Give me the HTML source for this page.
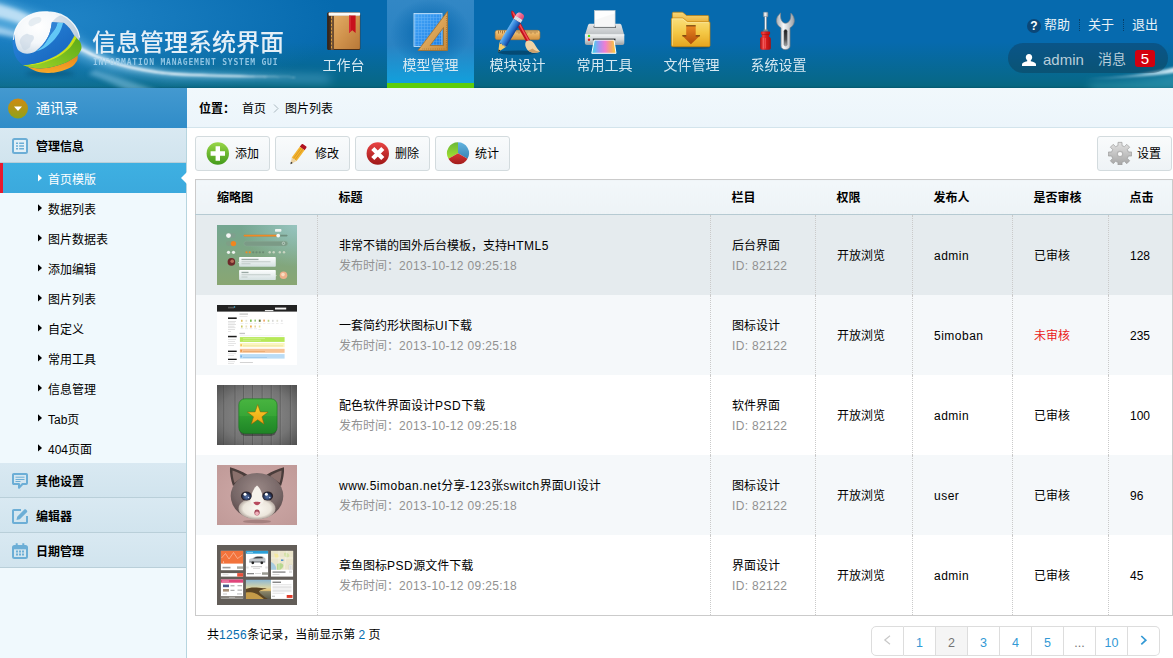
<!DOCTYPE html>
<html lang="zh-CN">
<head>
<meta charset="utf-8">
<title>信息管理系统界面</title>
<style>
*{margin:0;padding:0;box-sizing:content-box;}
html,body{width:1173px;height:658px;overflow:hidden;background:#fff;}
body{font-family:"Liberation Sans","Noto Sans CJK SC",sans-serif;font-size:12px;color:#000;position:relative;}
ul,li{list-style:none;}
i,cite,em{font-style:normal;}
/* ---------- header ---------- */
#top{position:absolute;left:0;top:0;width:1173px;height:88px;overflow:hidden;
 background:linear-gradient(to bottom,#066aae 0,#066aae 42px,#07688a 80px,#076781 86px,#04586f 88px);}
#topbg{position:absolute;left:0;top:0;}
#title{position:absolute;left:92px;top:25px;font-size:24px;line-height:36px;color:#e4eff7;font-weight:500;white-space:nowrap;letter-spacing:0;}
#subtitle{position:absolute;left:93px;top:57px;font-family:"DejaVu Sans Mono","Liberation Mono",monospace;font-size:8px;line-height:12px;color:#a8d4ee;white-space:nowrap;letter-spacing:.8px;opacity:.85;font-weight:bold;}
.nav{position:absolute;left:300px;top:0;height:88px;}
.nav li{float:left;width:87px;height:88px;text-align:center;position:relative;}
.nav li.sel{background:radial-gradient(ellipse 40px 34px at 50% 33px,rgba(8,104,174,.95) 0,rgba(8,104,174,.6) 50%,rgba(8,104,174,0) 100%),linear-gradient(to bottom,#3287c5 0,#2a83c3 45px,#12a0dc 83px);}
.nav li.sel:after{content:"";position:absolute;left:0;bottom:0;width:87px;height:5px;background:#5ccd0b;}
.nav li svg{position:absolute;left:19px;top:8px;width:48px;height:48px;}
.nav li h2{position:absolute;left:0;top:55px;width:87px;font-size:14px;line-height:20px;font-weight:normal;color:#d6e8f1;}
.toplinks{position:absolute;right:6px;top:15px;height:20px;}
.toplinks li{float:left;padding:0 9px;line-height:19px;font-size:13px;color:#e9f2f7;position:relative;}
.toplinks li+li:before{content:"";position:absolute;left:0;top:4px;height:12px;border-left:1px dotted #06406a;}
.toplinks .help{position:absolute;left:-8px;top:4px;width:14px;height:14px;border-radius:7px;background:#0b4778;color:#fff;font-size:12px;font-weight:bold;line-height:14px;text-align:center;}
.user{position:absolute;left:1008px;top:43px;width:160px;height:30px;border-radius:15px;background:rgba(20,40,60,.32);color:#b8ceda;font-size:15px;line-height:30px;white-space:nowrap;}
.user svg{position:absolute;left:14px;top:11px;}
.user span{position:absolute;left:35px;top:2px;}
.user i{position:absolute;left:90px;top:1px;font-size:14px;}
.user b{position:absolute;left:127px;top:7px;width:20px;height:17px;border-radius:3px;background:#d3000f;color:#fff;font-weight:normal;font-size:15px;line-height:17px;text-align:center;}
/* ---------- left ---------- */
#left{position:absolute;left:0;top:88px;width:186px;height:570px;background:#f0f9fd;border-right:1px solid #b7d5df;}
.lefttop{height:40px;line-height:40px;color:#fff;font-size:14px;background:linear-gradient(to bottom,#4499d0,#3a93cc 50%,#2f8cc8);width:187px;position:relative;}
.lefttop svg{position:absolute;left:8px;top:10px;}
.lefttop span{position:absolute;left:36px;top:0;}
.dd{height:35px;line-height:35px;font-weight:bold;font-size:12px;background:linear-gradient(to bottom,#d9e9f2,#d1e4ee);border-bottom:1px solid #b9cfd9;height:34px;position:relative;}
.dd svg{position:absolute;left:12px;top:10px;}
.dd span{position:absolute;left:36px;top:2px;}
.menuson li{height:30px;line-height:30px;position:relative;font-size:12px;}
.menuson li cite{position:absolute;left:38px;top:10.500px;width:4px;height:8px;}
.menuson li cite svg{display:block;fill:#000;}
.menuson li span{position:absolute;left:48px;top:2px;}
.menuson li.active{background:linear-gradient(to bottom,#3eb0e2,#3ba9dd);color:#fff;border-left:3px solid #e8192d;}
.menuson li.active cite{left:35px;}
.menuson li.active cite svg{fill:#fff;}
.menuson li.active span{left:45px;}
.menuson li.active em{position:absolute;right:-1px;top:9px;width:0;height:0;border-right:6px solid #fff;border-top:6px solid transparent;border-bottom:6px solid transparent;}
/* ---------- right ---------- */
#right{position:absolute;left:187px;top:88px;width:986px;height:570px;background:#fff;}
.place{height:39px;border-bottom:1px solid #d3e4ec;background:linear-gradient(to bottom,#f1f8fc,#ecf5fb);line-height:39px;position:relative;}
.place b{position:absolute;left:12px;top:2px;}
.place span{position:absolute;top:2px;}
.tool{position:absolute;top:48px;height:33px;line-height:33px;border:1px solid #d3dbde;border-radius:3px;background:linear-gradient(to bottom,#f9fbfc,#eef3f6);width:73px;}
.tool svg{position:absolute;left:10px;top:4px;}
.tool span{position:absolute;left:39px;top:1px;}
table{position:absolute;left:8px;top:91px;width:977px;border-collapse:collapse;border:1px solid #cbcbcb;table-layout:fixed;}
th{height:32px;line-height:32px;padding-top:2px;border-bottom:1px solid #b6cad2;text-align:left;padding-left:21px;background:linear-gradient(to bottom,#f2f7fa,#edf3f6);font-size:12px;}
td{height:78px;line-height:20px;padding:2px 0 0 21px;border-right:1px dotted #cacaca;font-size:12px;vertical-align:middle;}
td:last-child{border-right:none;}
td.img{padding:0 0 0 21px;height:80px;}
td p{color:#919191;}
td i{color:#ea2020;}
tr.odd td{background:#f5f8fa;}
tr.hov td{background:#e5ebee;}
.l{letter-spacing:.5px;}
td p .l,.pagin .l{letter-spacing:.35px;}
.thumb{display:block;width:80px;height:60px;}
.pagin{position:absolute;left:20px;top:537px;line-height:20px;}
.pagin i{color:#056dae;}
.plist{position:absolute;left:684px;top:538px;height:30px;}
.plist li{float:left;width:31px;height:28px;border:1px solid #ddd;border-left:none;text-align:center;line-height:32px;color:#3399d5;font-size:12.5px;position:relative;}
.plist li:first-child{border-left:1px solid #ddd;border-radius:5px 0 0 5px;color:#c4c4c4;}
.plist li:last-child{border-radius:0 5px 5px 0;}
.plist li.cur{background:#f5f5f5;color:#737373;}
.plist li.more{color:#737373;}
.plist li svg{position:absolute;left:11px;top:8px;}
</style>
</head>
<body>
<div id="top">
<svg id="topbg" width="1173" height="88" viewBox="0 0 1173 88"><defs><filter id="bl2" x="-20%" y="-50%" width="140%" height="200%"><feGaussianBlur stdDeviation="2"/></filter><filter id="bl1" x="-20%" y="-50%" width="140%" height="200%"><feGaussianBlur stdDeviation="1"/></filter><filter id="bl4" x="-20%" y="-50%" width="140%" height="200%"><feGaussianBlur stdDeviation="5"/></filter><radialGradient id="hg1" cx="0" cy="0" r="1" gradientUnits="userSpaceOnUse" gradientTransform="translate(40 20) scale(300 90)"><stop offset="0" stop-color="#2a8ed0" stop-opacity=".75"/><stop offset="1" stop-color="#2a8ed0" stop-opacity="0"/></radialGradient><linearGradient id="hs1" x1="0" y1="0" x2="1" y2="0"><stop offset="0" stop-color="#fff" stop-opacity=".55"/><stop offset=".25" stop-color="#dff2ff" stop-opacity=".45"/><stop offset=".7" stop-color="#bfe6ff" stop-opacity=".45"/><stop offset="1" stop-color="#bfe6ff" stop-opacity="0"/></linearGradient><linearGradient id="hs2" x1="0" y1="0" x2="1" y2="0"><stop offset="0" stop-color="#bfe6ff" stop-opacity="0"/><stop offset="1" stop-color="#e8f8ff" stop-opacity=".9"/></linearGradient><radialGradient id="gl1" cx=".38" cy=".3" r=".75"><stop offset="0" stop-color="#ffffff"/><stop offset=".45" stop-color="#f4f7fa"/><stop offset=".75" stop-color="#d3dfe9"/><stop offset="1" stop-color="#9dbbd2"/></radialGradient><linearGradient id="gb1" x1="0" y1="0" x2="1" y2="1"><stop offset="0" stop-color="#2a8ae0"/><stop offset="1" stop-color="#1560b8"/></linearGradient><linearGradient id="gg1" x1="1" y1="0" x2="0" y2="1"><stop offset="0" stop-color="#5aa818"/><stop offset=".5" stop-color="#7cc020"/><stop offset="1" stop-color="#a4d428"/></linearGradient><linearGradient id="go1" x1="0" y1="0" x2="0" y2="1"><stop offset="0" stop-color="#e8861a"/><stop offset="1" stop-color="#f8a82a"/></linearGradient></defs><rect x="0" y="0" width="420" height="88" fill="url(#hg1)"/><g filter="url(#bl4)"><path d="M-10 -5L50 18 85 42 120 62 170 72 330 76 330 82 170 80 110 72 70 55 30 38-10 30z" fill="#7cc8f0" opacity=".5"/></g><g filter="url(#bl2)"><path d="M-5 3C15 8 35 16 50 26L44 34C30 27 12 20-5 17z" fill="#eaf6ff" opacity=".7"/><path d="M70.0 39.0C71.8 40.0 76.0 42.4 81.0 45.0C86.0 47.6 92.7 51.5 100.0 54.5C107.3 57.5 116.7 60.7 125.0 63.0C133.3 65.3 141.7 67.0 150.0 68.5C158.3 70.0 165.0 70.9 175.0 71.8C185.0 72.6 197.5 73.0 210.0 73.5C222.5 74.0 235.8 74.5 250.0 75.0C264.2 75.5 287.5 76.0 295.0 76.2L295.0 78.2C287.5 78.2 264.2 78.1 250.0 78.0C235.8 77.9 222.5 77.8 210.0 77.5C197.5 77.2 185.0 76.9 175.0 76.2C165.0 75.6 158.3 74.7 150.0 73.5C141.7 72.3 133.3 71.0 125.0 69.0C116.7 67.0 107.3 64.2 100.0 61.5C92.7 58.8 86.0 55.4 81.0 53.0C76.0 50.6 71.8 48.0 70.0 47.0Z" fill="url(#hs1)"/><path d="M-5 26C15 30 40 40 60 48L58 52C40 44 15 36-5 34z" fill="#dff2ff" opacity=".6"/><path d="M95 70C120 78 140 84 160 92L130 92C118 86 105 80 88 74z" fill="#9fd8f4" opacity=".45"/></g><g filter="url(#bl1)"><path d="M70.0 42.2C71.8 43.2 76.0 45.6 81.0 48.0C86.0 50.4 92.7 54.1 100.0 56.9C107.3 59.7 116.7 62.7 125.0 64.9C133.3 67.1 141.7 68.6 150.0 70.0C158.3 71.4 165.0 72.3 175.0 73.1C185.0 73.9 197.5 74.3 210.0 74.8C222.5 75.2 235.8 75.5 250.0 75.9C264.2 76.3 287.5 76.7 295.0 76.9L295.0 77.5C287.5 77.4 264.2 77.3 250.0 77.1C235.8 76.9 222.5 76.6 210.0 76.2C197.5 75.9 185.0 75.6 175.0 74.9C165.0 74.2 158.3 73.3 150.0 72.0C141.7 70.7 133.3 69.2 125.0 67.1C116.7 64.9 107.3 62.0 100.0 59.1C92.7 56.2 86.0 52.6 81.0 50.0C76.0 47.4 71.8 44.8 70.0 43.8Z" fill="#fff" opacity=".92"/></g><g filter="url(#bl4)"><path d="M1090 84C1130 82 1155 78 1180 70L1180 92 1090 92z" fill="#4fc0d8" opacity=".38"/></g><g filter="url(#bl1)"><path d="M1085 78.500C1120 77 1150 73.500 1176 67L1176 72.500C1150 76.500 1120 78.500 1085 79.300z" fill="url(#hs2)"/></g><ellipse cx="50" cy="73.500" rx="24" ry="2.500" fill="#04405e" opacity=".45" filter="url(#bl2)"/><path d="M13.4 39.8C13.8 37.9 14.3 31.9 15.9 28.5C17.4 25.1 19.6 22.0 22.6 19.5C25.6 17.0 29.6 14.6 33.9 13.3C38.2 12.0 44.0 11.7 48.5 11.9C53.0 12.0 57.1 12.9 60.9 14.4C64.6 16.0 68.3 18.7 71.0 21.2C73.7 23.7 75.8 26.9 77.2 29.6C78.6 32.3 79.3 36.2 79.7 37.5C79.0 39.8 79.0 47.3 75.5 51.0C72.0 54.8 65.2 58.5 58.6 60.0C52.1 61.5 42.7 61.1 36.1 60.0C29.6 58.9 23.0 56.6 19.3 53.3C15.5 49.9 14.4 42.0 13.4 39.8Z" fill="url(#gl1)"/><path d="M20 40c1-3 3-5 6-6 2-1 3 1 5 1s3 1 3 3-2 3-3 5 0 4-2 5-3 3-5 2-2-3-3-5-2-3-1-5z" fill="#c4d4e2" opacity=".55"/><path d="M30 20c2-2 5-3 8-3s4 2 3 4-3 2-5 3-4 3-6 2-2-4 0-6z" fill="#d0dde8" opacity=".5"/><path d="M52 22.300L64.300 22.900 74.400 35.800 79.500 37.500C78 28 72 20 62 15 58 16 54 19 52 22.300z" fill="#b4c8da" opacity=".55"/><path d="M77.8 55.5C77.7 56.1 77.8 57.9 77.5 58.9C77.3 59.9 77.5 60.3 76.4 61.7C75.3 63.1 74.0 65.6 71.0 67.3C68.0 69.0 62.6 70.9 58.6 71.8C54.7 72.8 51.1 73.0 47.4 72.9C43.6 72.9 39.3 72.2 36.1 71.3C32.9 70.3 30.5 68.4 28.3 67.3C26.0 66.3 23.6 65.4 22.6 65.1C23.6 65.4 25.4 66.2 28.3 66.8C31.1 67.3 35.4 68.4 39.5 68.4C43.6 68.4 48.5 67.8 53.0 66.8C57.5 65.7 62.4 64.1 66.5 62.3C70.6 60.4 75.9 56.6 77.8 55.5Z" fill="url(#go1)"/><path d="M74.4 35.8C75.0 36.5 77.3 38.5 78.3 39.8C79.4 41.0 80.1 41.6 80.6 43.1C81.1 44.6 81.8 46.7 81.4 48.8C80.9 50.8 78.4 54.4 77.8 55.5C75.9 56.6 70.6 60.4 66.5 62.3C62.4 64.1 57.5 65.7 53.0 66.8C48.5 67.8 43.6 68.4 39.5 68.4C35.4 68.4 31.1 67.3 28.3 66.8C25.4 66.2 23.6 65.4 22.6 65.1C23.8 65.0 26.2 65.1 29.4 64.5C32.6 63.9 37.3 63.2 41.8 61.7C46.3 60.2 52.1 58.0 56.4 55.5C60.7 53.0 64.6 49.8 67.6 46.5C70.6 43.2 73.3 37.6 74.4 35.8Z" fill="url(#gg1)"/><path d="M74.4 35.8C74.8 36.2 76.3 37.7 76.6 38.1C75.4 39.8 72.6 45.2 69.4 48.3C66.3 51.5 62.2 54.5 57.7 57.0C53.2 59.4 47.2 61.6 42.4 62.9C37.7 64.3 32.7 64.8 29.4 65.2C26.1 65.5 23.8 65.1 22.6 65.1C23.8 65.0 26.2 65.1 29.4 64.5C32.6 63.9 37.3 63.2 41.8 61.7C46.3 60.2 52.1 58.0 56.4 55.5C60.7 53.0 64.6 49.8 67.6 46.5C70.6 43.2 73.3 37.6 74.4 35.8Z" fill="#d4e61c" opacity=".9"/><path d="M64.3 22.9C65.2 23.8 68.2 26.3 69.9 28.5C71.6 30.7 73.6 34.6 74.4 35.8C73.3 37.6 70.6 43.2 67.6 46.5C64.6 49.8 60.7 53.0 56.4 55.5C52.1 58.0 46.3 60.2 41.8 61.7C37.3 63.2 32.6 63.9 29.4 64.5C26.2 65.1 23.8 65.0 22.6 65.1C21.8 64.2 19.0 62.0 17.6 60.0C16.2 58.0 15.0 56.1 14.2 53.3C13.3 50.4 12.7 45.8 12.5 43.1C12.3 40.5 12.7 39.0 13.1 37.5C13.4 36.0 14.5 34.7 14.8 34.1C14.8 35.1 14.8 37.9 15.0 39.8C15.2 41.6 15.4 43.5 16.1 45.4C16.8 47.3 17.4 49.6 19.3 51.0C21.1 52.4 24.3 53.8 27.1 53.8C29.9 53.8 33.3 52.8 36.1 51.0C38.9 49.2 41.8 46.1 44.0 43.1C46.3 40.1 48.3 36.5 49.6 33.0C50.9 29.5 51.5 24.1 51.9 22.3C53.9 22.4 62.2 22.8 64.3 22.9Z" fill="url(#gb1)"/><path d="M57.5 22.7C58.4 22.7 62.2 22.8 63.1 22.9C62.6 24.4 61.4 28.9 59.8 31.9C58.1 34.9 55.6 38.2 53.0 40.9C50.4 43.6 46.8 46.5 44.0 48.2C41.2 49.9 37.4 50.7 36.1 51.2C37.4 50.2 41.7 47.5 44.0 44.8C46.3 42.2 48.3 38.0 50.2 35.3C52.1 32.5 54.0 30.6 55.3 28.5C56.5 26.4 57.1 23.6 57.5 22.7Z" fill="#62c8f6"/><path d="M51.9 22.3C52.8 22.4 56.6 22.6 57.5 22.7C57.1 23.6 56.5 26.4 55.3 28.5C54.0 30.6 52.1 32.5 50.2 35.3C48.3 38.0 46.3 42.2 44.0 44.8C41.7 47.5 37.4 50.2 36.1 51.2C37.4 49.9 41.8 46.2 44.0 43.1C46.3 40.1 48.3 36.5 49.6 33.0C50.9 29.5 51.5 24.1 51.9 22.3Z" fill="#2f82d4"/><path d="M13.400 39.800C13.800 37.900 14.300 31.900 15.900 28.500C17.400 25.100 19.600 22 22.600 19.500C25.600 17 29.600 14.600 33.900 13.300C38.200 12 44 11.700 48.500 11.900C53 12 57.100 12.900 60.900 14.400C64.600 16 68.300 18.700 71 21.200C73.700 23.700 75.800 26.900 77.200 29.600C78.600 32.300 79.300 36.200 79.700 37.500" fill="none" stroke="#fff" stroke-width="1.200" opacity=".85"/></svg>
<div id="title">信息管理系统界面</div>
<div id="subtitle">INFORMATION MANAGEMENT SYSTEM GUI</div>
<ul class="nav">
<li><svg viewBox="0 0 48 48"><defs><linearGradient id="bk1" x1="0" y1="0" x2="1" y2="1"><stop offset="0" stop-color="#e2ac66"/><stop offset=".5" stop-color="#d0924c"/><stop offset="1" stop-color="#b87838"/></linearGradient><linearGradient id="bk2" x1="0" y1="0" x2="1" y2="0"><stop offset="0" stop-color="#2e2018"/><stop offset=".55" stop-color="#4a3424"/><stop offset=".6" stop-color="#7a5a3c"/><stop offset="1" stop-color="#6a4a30"/></linearGradient></defs><rect x="8.300" y="4.200" width="33" height="37.800" rx="1.500" fill="#4a2e18"/><rect x="14.700" y="7.600" width="26.200" height="33.400" rx=".8" fill="url(#bk1)"/><path d="M8.300 6c0-1 .7-1.700 1.600-1.700h4.900V41.900H9.900c-.9 0-1.600-.7-1.600-1.600z" fill="url(#bk2)"/><rect x="9.600" y="4.500" width="31.500" height="3.200" rx=".6" fill="#fbfbf8"/><path d="M12.500 8.500v32" stroke="#e8a640" stroke-width=".9" stroke-dasharray="2.200 1.500"/><path d="M30 7.600h6.600v17.300l-3.300-2.700-3.300 2.700z" fill="#c8101c"/><path d="M30 7.600h1.800v15.700l-1.800 1.500z" fill="#e4404a" opacity=".55"/></svg><h2>工作台</h2></li>
<li class="sel"><svg viewBox="0 0 48 48"><defs><linearGradient id="bp1" x1="0" y1="0" x2="1" y2="1"><stop offset="0" stop-color="#46a6f6"/><stop offset="1" stop-color="#1b7fe6"/></linearGradient><linearGradient id="bp2" x1="0" y1="0" x2="1" y2="1"><stop offset="0" stop-color="#f0c27a"/><stop offset="1" stop-color="#c98a3a"/></linearGradient><pattern id="bpg" width="3" height="3" patternUnits="userSpaceOnUse"><path d="M0 .5h3M.5 0v3" stroke="#a8d6fc" stroke-width=".5" opacity=".4"/></pattern></defs><rect x="8" y="5.500" width="28" height="33" fill="url(#bp1)" stroke="#cfe8fd" stroke-width=".8"/><rect x="8.500" y="6" width="27" height="32" fill="url(#bpg)"/><path d="M41.500 3.500V42.500H12z M37.500 19.500V37.500H24z" fill="url(#bp2)" fill-rule="evenodd" stroke="#a8702a" stroke-width=".8"/><path d="M40.500 8v33H16" fill="none" stroke="#8a5a20" stroke-width=".8" stroke-dasharray=".6 1.600"/></svg><h2>模型管理</h2></li>
<li><svg viewBox="0 0 48 48"><defs><linearGradient id="ap1" x1="0" y1="0" x2="0" y2="1"><stop offset="0" stop-color="#f4cc88"/><stop offset=".5" stop-color="#e6ae5e"/><stop offset="1" stop-color="#d2903e"/></linearGradient><linearGradient id="ap2" x1="0" y1="0" x2="1" y2="0"><stop offset="0" stop-color="#6cb6f4"/><stop offset=".35" stop-color="#3e8ee0"/><stop offset=".7" stop-color="#2468c4"/><stop offset="1" stop-color="#123c8c"/></linearGradient><linearGradient id="ap3" x1="0" y1="0" x2="1" y2="0"><stop offset="0" stop-color="#fab0c4"/><stop offset=".5" stop-color="#f26a90"/><stop offset="1" stop-color="#d84a74"/></linearGradient></defs><ellipse cx="25" cy="44.600" rx="20" ry="2.200" fill="#03324e" opacity=".55"/><rect x="2.200" y="22.300" width="44.700" height="9.400" rx="2.200" fill="url(#ap1)" stroke="#b87a2c" stroke-width=".6"/><path d="M5.500 22.600v3M7.500 22.600v2M9.500 22.600v3M11.500 22.600v2M24 22.600v2M26 22.600v3M28 22.600v2M30 22.600v3M32 22.600v2M34 22.600v3M36 22.600v2M38 22.600v3M40 22.600v2M42 22.600v3M44 22.600v2" stroke="#8a5a20" stroke-width=".7"/><path d="M18.800 2.400C20.500 3 21.600 4.500 22.600 6.500L37 32 33.400 34 19.400 9C18.200 6.500 17.800 4 18.800 2.400z" fill="#c4101a"/><path d="M19.300 3.200C20.600 4 21.300 5 22 6.500L36.200 32.300 35 33 20.300 6.800C19.600 5.500 19.200 4.300 19.300 3.200z" fill="#f0505a"/><path d="M33 33.600C36 31.600 39.200 32.600 41.200 35.600 43.200 39 45 42 47 43.700 43 45.500 38 45 35 42.500 32.400 40 31.500 36 33 33.600z" fill="#eed4a6"/><path d="M39.500 40.500C41.500 42.300 44 43.500 47 43.700 43 45.500 38 45 35 42.500 36.500 42 38 41.500 39.500 40.500z" fill="#cfa06a"/><g transform="translate(5.300 44) rotate(31.200) translate(-26.600 -49.300)"><path d="M22.500 9.700V7.200c0-1.700 1.300-3 3-3h2.200c1.700 0 3 1.300 3 3v2.500z" fill="url(#ap3)"/><rect x="22.500" y="9.500" width="8.200" height="3.500" fill="#e9edf1"/><path d="M22.500 10.600h8.200M22.500 12h8.200" stroke="#b4bcc4" stroke-width=".4"/><rect x="22.500" y="13" width="8.200" height="27.300" fill="url(#ap2)"/><path d="M22.500 40.300h8.200l-4.100 9z" fill="#f6cc6a"/><path d="M22.500 40.300l1.400 1.200 1.400-1.200 1.300 1.200 1.400-1.200 1.300 1.200 1.400-1.200z" fill="#2468c4"/><path d="M25.500 46.900h2.200l-1.100 2.400z" fill="#1c1c1c"/></g></svg><h2>模块设计</h2></li>
<li><svg viewBox="0 0 48 48"><defs><linearGradient id="prT" x1="0" y1="0" x2="0" y2="1"><stop offset="0" stop-color="#e4e6e8"/><stop offset="1" stop-color="#bcc0c3"/></linearGradient><linearGradient id="prF" x1="0" y1="0" x2="0" y2="1"><stop offset="0" stop-color="#eef0f1"/><stop offset=".5" stop-color="#d2d5d7"/><stop offset="1" stop-color="#9a9ea2"/></linearGradient><linearGradient id="pr2" x1="0" y1="0" x2="1" y2="0"><stop offset="0" stop-color="#30dcec"/><stop offset=".3" stop-color="#a494f2"/><stop offset=".55" stop-color="#f07ed2"/><stop offset=".8" stop-color="#f6a86a"/><stop offset="1" stop-color="#f8d23c"/></linearGradient></defs><path d="M10 15.700h29.500c1 0 1.600.5 2 1.500L44.300 27.200H4.900L8 17.200c.4-1 1-1.500 2-1.500z" fill="url(#prT)"/><rect x="13.600" y="17.600" width="22.400" height="2.400" rx="1" fill="#34373a"/><rect x="14.400" y="2.500" width="20.700" height="16.600" fill="#f7f7f7" stroke="#c4c7ca" stroke-width=".6"/><path d="M15 3.100h19.500v2.500L15 12z" fill="#fff" opacity=".8"/><path d="M4.900 26.500h39.400V35c0 1.200-.8 2-2 2H6.900c-1.200 0-2-.8-2-2z" fill="url(#prF)"/><path d="M4.900 26.800h39.400" stroke="#f8f9fa" stroke-width=".7"/><rect x="12.800" y="30.600" width="22.700" height="1.800" fill="#2a2c2e"/><path d="M14.300 32.100H34l2 13.200H11.800z" fill="url(#pr2)" stroke="#fff" stroke-width="1"/><circle cx="9" cy="27.900" r="1.200" fill="#58e010"/><circle cx="9" cy="31.700" r="1.200" fill="#e42020"/></svg><h2>常用工具</h2></li>
<li><svg viewBox="0 0 48 48"><defs><linearGradient id="fd0" x1="0" y1="0" x2="0" y2="1"><stop offset="0" stop-color="#f8d878"/><stop offset="1" stop-color="#e8aa30"/></linearGradient><linearGradient id="fd1" x1="0" y1="0" x2="0" y2="1"><stop offset="0" stop-color="#fae07e"/><stop offset=".5" stop-color="#f4c846"/><stop offset="1" stop-color="#e6a41e"/></linearGradient><linearGradient id="fd2" x1="0" y1="0" x2="0" y2="1"><stop offset="0" stop-color="#ec8a22"/><stop offset="1" stop-color="#b04a08"/></linearGradient></defs><ellipse cx="24" cy="39.800" rx="19" ry="1.500" fill="#03324e" opacity=".35"/><path d="M5.300 5.400c0-.7.5-1.200 1.200-1.200h8.500c.5 0 .9.200 1.200.5l3.400 2.800h21c.7 0 1.200.5 1.200 1.200V16H5.300z" fill="url(#fd0)" stroke="#c07c08" stroke-width=".7"/><path d="M4.400 11.200c0-.7.5-1.200 1.200-1.200h9.800c.4 0 .8.150 1.100.4l4 3.300h21.300c.7 0 1.200.5 1.200 1.200v22.600c0 .7-.5 1.200-1.200 1.200H5.600c-.7 0-1.200-.5-1.200-1.200z" fill="url(#fd1)" stroke="#c07c08" stroke-width=".7"/><path d="M5.300 37.500V11.400c0-.3.200-.5.500-.5h9.500c.3 0 .6.100.8.300l4 3.400h21.600" fill="none" stroke="#fdeeb0" stroke-width=".7" opacity=".9"/><path d="M19.200 17.500h9.500v10.100h4.500L23.900 36.200 15.100 27.600h4.100z" fill="url(#fd2)"/><path d="M19.200 17.800h9.500M15.300 27.800h4M28.700 27.800h4.300" stroke="#3a1a00" stroke-width=".8"/></svg><h2>文件管理</h2></li>
<li><svg viewBox="0 0 48 48"><defs><linearGradient id="sd1" x1="0" y1="0" x2="1" y2="0"><stop offset="0" stop-color="#b01010"/><stop offset=".3" stop-color="#ee4040"/><stop offset=".55" stop-color="#d81c1c"/><stop offset="1" stop-color="#a80e0e"/></linearGradient><linearGradient id="sd2" x1="0" y1="0" x2="1" y2="0"><stop offset="0" stop-color="#a8aeb4"/><stop offset=".4" stop-color="#f6f8fa"/><stop offset="1" stop-color="#9aa0a6"/></linearGradient><linearGradient id="sd3" x1="0" y1="0" x2="0" y2="1"><stop offset="0" stop-color="#1c1c1e"/><stop offset=".6" stop-color="#4a4c4e"/><stop offset="1" stop-color="#a8aaac"/></linearGradient></defs><rect x="9.400" y="4.200" width="4.500" height="4.600" rx=".5" fill="url(#sd2)" stroke="#8a9096" stroke-width=".4"/><rect x="10.600" y="8.600" width="2.100" height="14" fill="url(#sd2)" stroke="#8a9096" stroke-width=".3"/><path d="M9.500 21.500h4.300v2H9.500z" fill="#7a8a80"/><path d="M7.300 23.500h8c.5 0 .8.300.8.800v1.400c0 .5-.3.800-.8.800l-.5 2.300c1.200.3 2 1 2 2.200v9c0 1-.8 1.700-1.800 1.700H7.900c-1 0-1.800-.7-1.800-1.700v-9c0-1.200.8-1.900 2-2.200l-.5-2.300c-.5 0-.8-.3-.8-.8v-1.400c0-.5.3-.8.800-.8z" fill="url(#sd1)"/><path d="M9.300 30v10.500M11.300 30v10.500" stroke="#f88" stroke-width=".7" opacity=".7"/><path d="M7.800 26.500h7.300" stroke="#8a0c0c" stroke-width=".6" opacity=".7"/><path d="M26.600 5C23.500 7.500 22.200 10.500 22.500 13.500 22.800 16.500 24.800 18.500 27 19.800V38C27 40.200 29 41.600 31.500 41.600S36 40.200 36 38V19.800C38.300 18.500 40 16.500 40.300 13.500 40.600 10.500 39.500 7.500 36.900 5.200 37 8 36.800 10.500 35.800 12.300 34.800 14.200 33.300 15.300 31.500 15.300S28.300 14.200 27.400 12.300C26.500 10.500 26.400 8 26.600 5z" fill="url(#sd2)" stroke="#7c8288" stroke-width=".7"/><rect x="29.900" y="21.500" width="3.300" height="16.500" rx="1.650" fill="url(#sd3)" stroke="#6a6e72" stroke-width=".4"/></svg><h2>系统设置</h2></li>
</ul>
<ul class="toplinks"><li><span class="help">?</span>帮助</li><li>关于</li><li>退出</li></ul>
<div class="user"><svg width="14" height="12" viewBox="0 0 14 12"><path d="M7 0c2 0 3.200 1.400 3.200 3.200 0 1.400-.7 2.500-1.400 3.100v.9c2.800.5 5.200 1.500 5.200 3.300V12H0v-1.500c0-1.800 2.400-2.800 5.200-3.300v-.9C4.500 5.700 3.800 4.600 3.800 3.200 3.800 1.400 5 0 7 0z" fill="#fff"/></svg><span>admin</span><i>消息</i><b>5</b></div>
</div>

<div id="left">
<div class="lefttop"><svg width="20" height="21" viewBox="0 0 20 21"><defs><linearGradient id="lg1" x1="0" y1="0" x2="0" y2="1"><stop offset="0" stop-color="#d08a12"/><stop offset="1" stop-color="#8fa21a"/></linearGradient></defs><circle cx="10" cy="10.500" r="10" fill="url(#lg1)"/><path d="M6 8.500h8l-4 4.500z" fill="#fff"/></svg><span>通讯录</span></div>
<div class="dd"><svg width="16" height="16" viewBox="0 0 16 16"><rect x="1" y="1" width="14" height="14" rx="1.500" fill="#e3f0f7" stroke="#6caed6" stroke-width="2"/><path d="M4 5.200h2M7.200 5.200H12M4 8h2M7.200 8H12M4 10.800h2M7.200 10.800H12" stroke="#6caed6" stroke-width="1.600"/></svg><span>管理信息</span></div>
<ul class="menuson">
<li class="active"><cite><svg width="4" height="8" viewBox="0 0 4 8"><path d="M0 .2L4 3.900 0 7.600z"/></svg></cite><span>首页模版</span><em></em></li>
<li><cite><svg width="4" height="8" viewBox="0 0 4 8"><path d="M0 .2L4 3.900 0 7.600z"/></svg></cite><span>数据列表</span></li>
<li><cite><svg width="4" height="8" viewBox="0 0 4 8"><path d="M0 .2L4 3.900 0 7.600z"/></svg></cite><span>图片数据表</span></li>
<li><cite><svg width="4" height="8" viewBox="0 0 4 8"><path d="M0 .2L4 3.900 0 7.600z"/></svg></cite><span>添加编辑</span></li>
<li><cite><svg width="4" height="8" viewBox="0 0 4 8"><path d="M0 .2L4 3.900 0 7.600z"/></svg></cite><span>图片列表</span></li>
<li><cite><svg width="4" height="8" viewBox="0 0 4 8"><path d="M0 .2L4 3.900 0 7.600z"/></svg></cite><span>自定义</span></li>
<li><cite><svg width="4" height="8" viewBox="0 0 4 8"><path d="M0 .2L4 3.900 0 7.600z"/></svg></cite><span>常用工具</span></li>
<li><cite><svg width="4" height="8" viewBox="0 0 4 8"><path d="M0 .2L4 3.900 0 7.600z"/></svg></cite><span>信息管理</span></li>
<li><cite><svg width="4" height="8" viewBox="0 0 4 8"><path d="M0 .2L4 3.900 0 7.600z"/></svg></cite><span>Tab页</span></li>
<li><cite><svg width="4" height="8" viewBox="0 0 4 8"><path d="M0 .2L4 3.900 0 7.600z"/></svg></cite><span>404页面</span></li>
</ul>
<div class="dd"><svg width="16" height="16" viewBox="0 0 16 16"><path d="M1.800 1h12.400c.5 0 .8.300.8.800v8.400c0 .5-.3.800-.8.800H10.500L7 14.800V11H1.800c-.5 0-.8-.3-.8-.8V1.800c0-.5.300-.8.800-.8z" fill="none" stroke="#6caed6" stroke-width="2" stroke-linejoin="round"/><path d="M3.500 4.200h9M3.500 6.500h9M3.500 8.500h5" stroke="#6caed6" stroke-width="1"/></svg><span>其他设置</span></div>
<div class="dd"><svg width="16" height="16" viewBox="0 0 16 16"><path d="M9 2H1.800c-.5 0-.8.300-.8.800v11.400c0 .5.300.8.800.8h12.400c.5 0 .8-.3.800-.8V8" fill="none" stroke="#6caed6" stroke-width="2"/><path d="M4.500 12l.7-3.300L12.300 1.600c.5-.5 1.200-.5 1.700 0l.9.900c.5.500.5 1.200 0 1.700L7.800 11.300z" fill="#6caed6"/></svg><span>编辑器</span></div>
<div class="dd"><svg width="16" height="16" viewBox="0 0 16 16"><rect x="1" y="3" width="14" height="12" rx="1.500" fill="none" stroke="#6caed6" stroke-width="2"/><path d="M1 4.800h14" stroke="#6caed6" stroke-width="3"/><path d="M4.700 .3v3M11.300 .3v3" stroke="#6caed6" stroke-width="2"/><path d="M4 8.500h2M7 8.500h2M10 8.500h2M4 11.500h2M7 11.500h2M10 11.500h2" stroke="#6caed6" stroke-width="1.800"/></svg><span>日期管理</span></div>
</div>

<div id="right">
<div class="place"><b>位置：</b><span style="left:55px">首页</span><svg style="position:absolute;left:86px;top:16px" width="6" height="9" viewBox="0 0 6 9"><path d="M1 .5l4 4-4 4" fill="none" stroke="#a9b7bf" stroke-width="1"/></svg><span style="left:98px">图片列表</span></div>
<div class="tool" style="left:8px"><svg width="24" height="24" viewBox="0 0 24 24"><defs><linearGradient id="t1g" x1="0" y1="0" x2="0" y2="1"><stop offset="0" stop-color="#98d648"/><stop offset="1" stop-color="#439a1a"/></linearGradient></defs><circle cx="11.800" cy="12.500" r="11.200" fill="url(#t1g)"/><path d="M11.800 5.300v14.400M4.600 12.500h14.400" stroke="#fff" stroke-width="4.400"/></svg><span>添加</span></div>
<div class="tool" style="left:88px"><svg width="24" height="24" viewBox="0 0 24 24"><g transform="translate(4.500 23.200) rotate(36.500)"><path d="M-3 -19.600h6v-2.800c0-.7-.5-1.200-1.200-1.200h-3.600c-.7 0-1.200.5-1.200 1.200z" fill="#b01222"/><rect x="-3" y="-19.600" width="6" height="13.400" fill="#f2b430"/><path d="M-1 -19.600v13.400M1 -19.600v13.400" stroke="#d8901a" stroke-width=".7"/><path d="M-3 -6.200h6L0 0z" fill="#ecd2a0"/><path d="M-1.100 -2.200h2.200L0 0z" fill="#222"/></g></svg><span>修改</span></div>
<div class="tool" style="left:168px"><svg width="24" height="24" viewBox="0 0 24 24"><defs><linearGradient id="t3g" x1="0" y1="0" x2="0" y2="1"><stop offset="0" stop-color="#e84444"/><stop offset="1" stop-color="#a01818"/></linearGradient></defs><circle cx="11.800" cy="12.500" r="11.200" fill="url(#t3g)"/><path d="M6.800 7.500l10 10M16.800 7.500l-10 10" stroke="#fff" stroke-width="4.400"/></svg><span>删除</span></div>
<div class="tool" style="left:248px"><svg width="24" height="24" viewBox="0 0 24 24"><defs><linearGradient id="t4a" x1="0" y1="0" x2="0" y2="1"><stop offset="0" stop-color="#6ab838"/><stop offset="1" stop-color="#a4e030"/></linearGradient><linearGradient id="t4b" x1="0" y1="0" x2="0" y2="1"><stop offset="0" stop-color="#62b4e0"/><stop offset="1" stop-color="#3a84b4"/></linearGradient><linearGradient id="t4c" x1="0" y1="0" x2="0" y2="1"><stop offset="0" stop-color="#d83434"/><stop offset="1" stop-color="#a01c1c"/></linearGradient></defs><path d="M12 12.300V1.300A11 11 0 0 0 2.470 17.800z" fill="url(#t4a)"/><path d="M12 12.300V1.300A11 11 0 0 1 21.530 17.800z" fill="url(#t4b)"/><path d="M12 12.300L2.470 17.800A11 11 0 0 0 21.530 17.800z" fill="url(#t4c)"/></svg><span>统计</span></div>
<div class="tool" style="left:910px"><svg width="24" height="24" viewBox="0 -1 24 24"><defs><linearGradient id="t5g" x1="0" y1="0" x2="0" y2="1"><stop offset="0" stop-color="#e2e2e2"/><stop offset="1" stop-color="#a4a4a4"/></linearGradient></defs><path d="M9.96 3.65 L10.00 0.37 L14.00 0.37 L14.04 3.65 L16.46 4.65 L18.81 2.36 L21.64 5.19 L19.35 7.54 L20.35 9.96 L23.63 10.00 L23.63 14.00 L20.35 14.04 L19.35 16.46 L21.64 18.81 L18.81 21.64 L16.46 19.35 L14.04 20.35 L14.00 23.63 L10.00 23.63 L9.96 20.35 L7.54 19.35 L5.19 21.64 L2.36 18.81 L4.65 16.46 L3.65 14.04 L0.37 14.00 L0.37 10.00 L3.65 9.96 L4.65 7.54 L2.36 5.19 L5.19 2.36 L7.54 4.65Z" fill="url(#t5g)" stroke="#9a9a9a" stroke-width=".7" stroke-linejoin="round"/><circle cx="12" cy="12" r="2.700" fill="#fafafa" stroke="#b4b4b4" stroke-width="1.200"/></svg><span>设置</span></div>
<table>
<colgroup><col style="width:122px"><col style="width:393px"><col style="width:105px"><col style="width:97px"><col style="width:100px"><col style="width:96px"><col></colgroup>
<thead><tr><th>缩略图</th><th>标题</th><th>栏目</th><th>权限</th><th>发布人</th><th>是否审核</th><th>点击</th></tr></thead>
<tbody>
<tr class="hov"><td class="img"><svg class="thumb" viewBox="0 0 80 60"><defs><linearGradient id="i1a" x1="0" y1="0" x2="0" y2="1"><stop offset="0" stop-color="#74a691"/><stop offset="1" stop-color="#89a672"/></linearGradient><radialGradient id="i1b" cx="1" cy="0" r=".7"><stop offset="0" stop-color="#9cc8c4" stop-opacity=".9"/><stop offset="1" stop-color="#9cc8c4" stop-opacity="0"/></radialGradient><linearGradient id="i1c" x1="0" y1="0" x2="0" y2="1"><stop offset="0" stop-color="#fdfefe"/><stop offset="1" stop-color="#d4e0e0"/></linearGradient></defs><rect width="80" height="60" fill="url(#i1a)"/><rect width="80" height="60" fill="url(#i1b)"/><rect x="9" y="8.200" width="9.600" height="4.800" rx="2.400" fill="#7f9f8e"/><circle cx="11.500" cy="10.600" r="2.400" fill="#f4f6f4"/><rect x="26.600" y="9.800" width="44" height="1.600" rx=".8" fill="#6f8f7e"/><rect x="26.600" y="9.700" width="34.600" height="1.800" rx=".9" fill="#f08a24"/><circle cx="61.200" cy="10.600" r="1.900" fill="#f6f8f8"/><rect x="58" y="3.900" width="6.400" height="2.800" rx=".8" fill="#eef4f2"/><rect x="9" y="16.200" width="9.600" height="4.800" rx="2.400" fill="#7f9f86"/><circle cx="16.400" cy="18.600" r="2.700" fill="#f0861e"/><rect x="26.900" y="16.200" width="43.800" height="4.800" rx="2.400" fill="#7b9a86" stroke="#8fae98" stroke-width=".4"/><circle cx="66.500" cy="18.400" r="1.200" fill="none" stroke="#dfe9e2" stroke-width=".6"/><circle cx="11.500" cy="27.300" r="1.600" fill="#eef2ee"/><circle cx="16.500" cy="27.300" r="1.600" fill="#eef2ee"/><circle cx="29.500" cy="27.300" r="1.100" fill="#f08a24"/><circle cx="32.800" cy="27.300" r="1.100" fill="#f08a24"/><circle cx="36.200" cy="27.300" r="1.100" fill="#6e8c74"/><circle cx="39.500" cy="27.300" r="1.100" fill="#6e8c74"/><circle cx="42.800" cy="27.300" r="1.100" fill="#6e8c74"/><circle cx="46.100" cy="27.300" r="1.100" fill="#6e8c74"/><circle cx="52.700" cy="27.300" r="1.200" fill="#c8d4c0"/><circle cx="56.700" cy="27.300" r="1.200" fill="#c8d4c0"/><circle cx="62.800" cy="27.300" r="1.200" fill="#c8d4c0"/><circle cx="67" cy="27.300" r="1.200" fill="#c8d4c0"/><circle cx="14.400" cy="36.900" r="3.800" fill="#6e2a2a"/><circle cx="15.200" cy="36.200" r="1.800" fill="#b8705a"/><rect x="22.100" y="31.900" width="36.700" height="9.800" rx=".8" fill="url(#i1c)"/><path d="M22.300 36.800l-1.200.8 1.200.8z" fill="#f0f4f4"/><rect x="24.500" y="33.800" width="17" height="1.300" fill="#9aa8a4"/><rect x="24.500" y="36.400" width="29" height=".8" fill="#b8c4c0"/><rect x="24.500" y="38.400" width="9" height=".8" fill="#b8c4c0"/><rect x="22.100" y="44.900" width="36.700" height="10.100" rx=".8" fill="url(#i1c)"/><path d="M58.600 50l1.200.8-1.200.8z" fill="#f0f4f4"/><rect x="24.500" y="46.800" width="7" height="1.300" fill="#9aa8a4"/><rect x="24.500" y="49.400" width="29" height=".8" fill="#b8c4c0"/><rect x="24.500" y="51.600" width="6" height=".8" fill="#b8c4c0"/><circle cx="66.500" cy="50.200" r="3.800" fill="#eeb08a"/><circle cx="66" cy="49.600" r="1.800" fill="#f8dcc0"/></svg></td><td>非常不错的国外后台模板，支持<span class="l">HTML5</span><p>发布时间：<span class="l">2013-10-12 09:25:18</span></p></td><td>后台界面<p><span class="l">ID: 82122</span></p></td><td>开放浏览</td><td><span class="l">admin</span></td><td>已审核</td><td>128</td></tr>
<tr class="odd"><td class="img"><svg class="thumb" viewBox="0 0 80 60"><rect width="80" height="60" fill="#fff"/><rect width="80" height="6.600" fill="#222"/><rect x="58" y="2.600" width="11.200" height="1.900" fill="#f4f4f4"/><rect x="47.900" y="5" width="8.500" height="1.200" fill="#e8e8e8"/><rect x="11" y="1.800" width="6" height="1.600" fill="#555"/><circle cx="17.500" cy="2" r=".8" fill="#4ac0e8"/><rect x="22.500" y="8.400" width="8.500" height="1.400" fill="#c8c8c8"/><rect x="22.500" y="11" width="8" height=".6" fill="#dadada"/><rect x="11" y="12.400" width="8.700" height="1.600" fill="#1c1c1c"/><rect x="11" y="30.800" width="8.700" height="1.500" fill="#1c1c1c"/><rect x="11" y="45.600" width="8.700" height="1.400" fill="#1c1c1c"/><rect x="11" y="53.700" width="8.700" height="1.300" fill="#1c1c1c"/><g fill="#d4d4d4"><rect x="11" y="16" width="8" height=".7"/><rect x="11" y="17.600" width="7" height=".7"/><rect x="11" y="19.200" width="8" height=".7"/><rect x="11" y="20.800" width="6.500" height=".7"/><rect x="11" y="22.400" width="7.500" height=".7"/><rect x="11" y="24" width="7" height=".7"/><rect x="11" y="26" width="3" height=".7"/><rect x="11" y="34" width="8" height=".6"/><rect x="11" y="36" width="7" height=".6"/><rect x="11" y="38" width="8" height=".6"/><rect x="11" y="40" width="6" height=".6"/><rect x="11" y="48.500" width="8" height=".6"/><rect x="11" y="50.200" width="6" height=".6"/><rect x="11" y="56.500" width="7" height=".6"/><rect x="11" y="58" width="6" height=".6"/></g><g><rect x="24" y="14.800" width="1.600" height="2" fill="#e0c060"/><rect x="28.500" y="14.800" width="1.600" height="2" fill="#e4e4d4"/><rect x="33" y="14.600" width="1.700" height="2.200" fill="#78b848"/><rect x="37.400" y="14.600" width="1.600" height="2" fill="#98c878"/><rect x="41.800" y="14.600" width="1.900" height="2.200" fill="#6a7a3a"/><rect x="46.300" y="14.600" width="1.600" height="2" fill="#f0a060"/><rect x="50.700" y="14.800" width="1.600" height="2" fill="#b8d080"/><rect x="55" y="14.800" width="1.600" height="2" fill="#d8d8d8"/><rect x="59.500" y="14.800" width="1.600" height="2" fill="#e0e0d0"/><rect x="64" y="14.800" width="1.600" height="2" fill="#e4e4e4"/><rect x="24" y="20.500" width="1.600" height="2" fill="#c8c860"/><rect x="28.500" y="20.500" width="1.600" height="2" fill="#e8e0c0"/><rect x="33" y="20.500" width="1.800" height="2" fill="#f0b050"/><rect x="37.400" y="20.500" width="1.600" height="2" fill="#e8d8a0"/><rect x="41.800" y="20.500" width="1.600" height="2" fill="#e8e4a0"/></g><g fill="#dcdcdc"><rect x="23.500" y="18" width="3" height=".5"/><rect x="28" y="18" width="3" height=".5"/><rect x="32.500" y="18" width="3" height=".5"/><rect x="37" y="18" width="3" height=".5"/><rect x="41.400" y="18" width="3" height=".5"/><rect x="46" y="18.400" width="2.500" height=".5"/><rect x="50.300" y="18" width="3" height=".5"/><rect x="54.600" y="18" width="2.600" height=".5"/><rect x="59" y="18" width="2.600" height=".5"/><rect x="63.600" y="18" width="2.600" height=".5"/><rect x="23.500" y="23.600" width="3" height=".5"/><rect x="28" y="23.600" width="3" height=".5"/><rect x="32.500" y="23.600" width="3" height=".5"/><rect x="37" y="23.600" width="3" height=".5"/><rect x="41.400" y="24" width="3" height=".5"/></g><rect x="22.500" y="27.800" width="5.500" height="1.300" fill="#c4c4c4"/><rect x="22.900" y="30.600" width="44" height=".5" fill="#e4e4e4"/><rect x="22.900" y="32.100" width="44.700" height="4.800" fill="#b6e858"/><rect x="26" y="33.300" width="22" height=".6" fill="#d8f4a0"/><rect x="26" y="34.900" width="18" height=".6" fill="#d8f4a0"/><rect x="22.900" y="38" width="44.700" height="4.200" fill="#fbf6c0"/><rect x="23.600" y="39.200" width="1" height="2" fill="#f0a020"/><rect x="26" y="40.600" width="40" height=".6" fill="#e8dc90"/><rect x="22.900" y="43.800" width="44.700" height="4" fill="#f8c496"/><rect x="23.600" y="44.800" width="1" height="2" fill="#e87818"/><rect x="26" y="46.200" width="22" height=".6" fill="#e8a060"/><rect x="22.900" y="49.100" width="44.700" height="4.500" fill="#badcf6"/><rect x="23.600" y="50.400" width="1" height="2" fill="#4a98e0"/><rect x="26" y="52" width="24" height=".6" fill="#90c0e8"/><rect x="22.900" y="57.200" width="13" height=".8" fill="#c8c8c8"/></svg></td><td>一套简约形状图标<span class="l">UI</span>下载<p>发布时间：<span class="l">2013-10-12 09:25:18</span></p></td><td>图标设计<p><span class="l">ID: 82122</span></p></td><td>开放浏览</td><td><span class="l">5imoban</span></td><td><i>未审核</i></td><td>235</td></tr>
<tr><td class="img"><svg class="thumb" viewBox="0 0 80 60"><defs><radialGradient id="i3a" cx=".5" cy=".5" r=".75"><stop offset="0" stop-color="#909090"/><stop offset=".6" stop-color="#747474"/><stop offset="1" stop-color="#4a4a4a"/></radialGradient><linearGradient id="i3b" x1="0" y1="0" x2="0" y2="1"><stop offset="0" stop-color="#48b440"/><stop offset=".49" stop-color="#38a636"/><stop offset=".51" stop-color="#2e9c30"/><stop offset="1" stop-color="#1f8426"/></linearGradient><linearGradient id="i3c" x1="0" y1="0" x2="0" y2="1"><stop offset="0" stop-color="#fbd22a"/><stop offset="1" stop-color="#eda012"/></linearGradient></defs><rect width="80" height="60" fill="url(#i3a)"/><path d="M6.900 0v60M18.100 0v60M26.600 0v60M35.600 0v60M45.200 0v60M54.300 0v60M63.300 0v60M73.400 0v60" stroke="#2a2a2a" stroke-width=".7" opacity=".5"/><path d="M7.600 0v60M18.800 0v60M27.300 0v60M36.300 0v60M45.900 0v60M55 0v60M64 0v60M74.100 0v60" stroke="#b0b0b0" stroke-width=".5" opacity=".3"/><rect x="22.500" y="17" width="37" height="34" rx="6" fill="#1a1a1a" opacity=".45"/><rect x="21.800" y="13.800" width="38.300" height="34.800" rx="6" fill="url(#i3b)" stroke="#16701c" stroke-width=".6"/><path d="M40.700 19.600l2.600 7.300 7.700.2-6.100 4.700 2.200 7.400-6.400-4.400-6.400 4.400 2.200-7.400-6.100-4.700 7.700-.2z" fill="url(#i3c)" stroke="#8a5a08" stroke-width=".5"/></svg></td><td>配色软件界面设计<span class="l">PSD</span>下载<p>发布时间：<span class="l">2013-10-12 09:25:18</span></p></td><td>软件界面<p><span class="l">ID: 82122</span></p></td><td>开放浏览</td><td><span class="l">admin</span></td><td>已审核</td><td>100</td></tr>
<tr class="odd"><td class="img"><svg class="thumb" viewBox="0 0 80 60"><defs><radialGradient id="i4a" cx=".5" cy=".5" r=".7"><stop offset="0" stop-color="#cfaaa8"/><stop offset="1" stop-color="#c09a98"/></radialGradient><radialGradient id="i4b" cx=".5" cy=".35" r=".65"><stop offset="0" stop-color="#9a8886"/><stop offset=".7" stop-color="#766666"/><stop offset="1" stop-color="#5a4a4a"/></radialGradient><radialGradient id="i4c" cx=".5" cy=".5" r=".5"><stop offset="0" stop-color="#fbf8f2"/><stop offset=".75" stop-color="#ece6dc"/><stop offset="1" stop-color="#b4a8a0"/></radialGradient><filter id="i4f" x="-10%" y="-10%" width="120%" height="120%"><feGaussianBlur stdDeviation=".55"/></filter><radialGradient id="i4d" cx=".5" cy=".6" r=".55"><stop offset="0" stop-color="#5a78b0"/><stop offset="1" stop-color="#1a2440"/></radialGradient></defs><rect width="80" height="60" fill="url(#i4a)"/><ellipse cx="40" cy="56.500" rx="14" ry="1.800" fill="#8a6866" opacity=".55"/><g filter="url(#i4f)"><path d="M13 2.200c5 1.200 12 4 17.500 7.500L16 21c-2-6-3.500-13-3-18.800z" fill="#4a3c3a"/><path d="M15.500 5.500c3.500 1.200 8 3.200 11.500 5.500L17.500 18c-1.300-4-2.200-8.500-2-12.500z" fill="#8a706c"/><path d="M67 2.200c-5 1.200-12 4-17.500 7.500L64 21c2-6 3.500-13 3-18.800z" fill="#4a3c3a"/><path d="M64.500 5.500c-3.500 1.200-8 3.200-11.500 5.500L62.500 18c1.300-4 2.200-8.500 2-12.500z" fill="#8a706c"/><ellipse cx="40" cy="31" rx="26.300" ry="23" fill="url(#i4b)"/></g><ellipse cx="40" cy="43.500" rx="18.500" ry="10.800" fill="url(#i4c)"/><path d="M40 20.500c3 2 5.500 8 6.500 14 .5 3-1 6-6.500 6s-7-3-6.500-6c1-6 3.500-12 6.500-14z" fill="#f6f2ec"/><ellipse cx="29.300" cy="31" rx="5.400" ry="4.600" fill="#2a2026"/><ellipse cx="29.600" cy="31.200" rx="4.500" ry="3.900" fill="url(#i4d)"/><circle cx="28" cy="29.300" r="1.500" fill="#fff"/><circle cx="31.500" cy="32.500" r=".7" fill="#dfe8ff"/><ellipse cx="50.700" cy="31" rx="5.400" ry="4.600" fill="#2a2026"/><ellipse cx="50.400" cy="31.200" rx="4.500" ry="3.900" fill="url(#i4d)"/><circle cx="49.400" cy="29.300" r="1.500" fill="#fff"/><circle cx="52.800" cy="32.500" r=".7" fill="#dfe8ff"/><path d="M36.600 37.200c1.200-.7 5.600-.7 6.800 0 .5 1-1.800 3-3.400 3s-3.900-2-3.400-3z" fill="#b84a5e"/><ellipse cx="40" cy="47.600" rx="2.700" ry="3" fill="#a4485a"/><ellipse cx="40" cy="48.600" rx="1.900" ry="2" fill="#eeb0ba"/></svg></td><td><span class="l">www.5imoban.net</span>分享<span class="l">-123</span>张<span class="l">switch</span>界面<span class="l">UI</span>设计<p>发布时间：<span class="l">2013-10-12 09:25:18</span></p></td><td>图标设计<p><span class="l">ID: 82122</span></p></td><td>开放浏览</td><td><span class="l">user</span></td><td>已审核</td><td>96</td></tr>
<tr><td class="img"><svg class="thumb" viewBox="0 0 80 60"><defs><linearGradient id="i5a" x1="0" y1="0" x2="0" y2="1"><stop offset="0" stop-color="#8cb8d4"/><stop offset=".4" stop-color="#d8d4a8"/><stop offset=".55" stop-color="#e8c474"/><stop offset=".62" stop-color="#8a8468"/><stop offset="1" stop-color="#5a5a4c"/></linearGradient></defs><rect width="80" height="60" fill="#625d58"/><rect x="3.900" y="5.900" width="22.200" height="19.300" fill="#fff"/><rect x="3.900" y="5.900" width="22.200" height="12.700" fill="#f2733c"/><path d="M4.500 13l4-4.500 3.500 5.500 4.500-6.500 4 6 5-3.500" fill="none" stroke="#fbd0b8" stroke-width=".6"/><rect x="5.500" y="21.800" width="8" height="1.600" fill="#9a9a9a"/><rect x="20" y="21.400" width="6.100" height="2.400" fill="#a8a8a0"/><circle cx="6.500" cy="17" r=".6" fill="#fff"/><rect x="3.900" y="28.100" width="22.200" height="3.500" fill="#fff"/><rect x="20.200" y="28.100" width="5.900" height="3.500" fill="#e8503a"/><rect x="5.500" y="29.400" width="6" height=".7" fill="#d0d0d0"/><rect x="28.900" y="5.900" width="22.200" height="25.700" fill="#fff"/><rect x="28.900" y="5.900" width="22.200" height="2.800" fill="#2a9fd8"/><rect x="30" y="6.900" width="6" height=".8" fill="#a8dcf4"/><path d="M32 15.500c0-1.500 1-2 3-2.300l3.500-1.800c2-.6 6-.6 7.500 0l1.500 1.300c.8.300 1 1 1 2v2.300c0 .6-.4 1-1 1H33c-.6 0-1-.4-1-1z" fill="#c2c6ca"/><path d="M36 13.500l2.800-1.400c1.800-.4 5-.4 6.400 0l1 1.200z" fill="#3c3e42"/><path d="M32.500 16.200h15.500v1H32.500z" fill="#8a8e92"/><circle cx="35.800" cy="17.800" r="1.400" fill="#222"/><circle cx="44.800" cy="17.800" r="1.400" fill="#222"/><rect x="34" y="21.300" width="11" height=".9" fill="#b8b8b8"/><rect x="36" y="23" width="7" height=".7" fill="#d0d0d0"/><rect x="29.200" y="21.500" width="2.500" height="2" fill="#e4e4e4"/><rect x="48.300" y="21.500" width="2.500" height="2" fill="#e4e4e4"/><rect x="30" y="28" width="7" height="1.300" fill="#8a8a8a"/><rect x="38" y="28.300" width="6" height=".7" fill="#c8c8c8"/><rect x="45" y="27.300" width="6.100" height="2.500" fill="#9a9a92"/><rect x="54" y="5.900" width="22.100" height="25.700" fill="#fff"/><rect x="54" y="5.900" width="22.100" height="18.800" fill="#ebe5cc"/><path d="M54 17c3 1 5 3.500 5.500 7.700H54z" fill="#a8cce0"/><path d="M60 19c2-1 5-1 6 .5s-.5 4-3 5.200h-3z" fill="#b8d890"/><path d="M67 8c2-.5 4 0 5 1.500s0 3-2 3-3.500-2-3-4.500z" fill="#d4e0a8"/><path d="M57 8.500l4 .5 1 3-3.500 1.500z" fill="#f4e8a0"/><path d="M54 13h22M62 5.900v18.800M70 5.900l-3 18.800" stroke="#fff" stroke-width=".5" opacity=".8"/><rect x="64" y="14.500" width="2.400" height="1.400" fill="#3a8ad0"/><rect x="72" y="20" width="3.200" height="5" fill="#fff" stroke="#b8b8b8" stroke-width=".3"/><path d="M72.500 21h2.200M72.500 22h2.200M72.500 23h2.200M72.500 24h2.200" stroke="#9a9a9a" stroke-width=".4"/><rect x="55.500" y="26.400" width="13" height="1.400" fill="#8a8a8a"/><rect x="55.500" y="29" width="7" height=".7" fill="#c8c8c8"/><rect x="72" y="26.500" width="3" height="1" fill="#c8c8c8"/><rect x="3.900" y="34.500" width="22.200" height="19.100" fill="#fff"/><rect x="3.900" y="34.500" width="22.200" height="3.200" fill="#e0457b"/><rect x="5" y="35.600" width="7" height=".9" fill="#f4a8c4"/><rect x="6" y="39.600" width="6" height="2.600" fill="#4a5a8a"/><rect x="13.500" y="40.300" width="4" height="1" fill="#9a9a9a"/><rect x="20.500" y="40" width="4.500" height="1.300" fill="#b8b8b8"/><rect x="6" y="44" width="6" height="2.600" fill="#a89078"/><rect x="13.500" y="44.800" width="4" height="1" fill="#9a9a9a"/><rect x="20.500" y="44.500" width="4.500" height="1.300" fill="#b8b8b8"/><rect x="6" y="48.500" width="4" height="1" fill="#c8c8c8"/><rect x="20" y="48.300" width="5" height="1.300" fill="#c8c8c8"/><rect x="3.900" y="51" width="22.200" height="2.600" fill="#8a8680"/><rect x="12" y="51.900" width="6" height=".8" fill="#c4c0bc"/><rect x="28.900" y="34.800" width="25.100" height="19.100" fill="url(#i5a)"/><path d="M28.900 44c3-1.500 8-2 13-1.200 3 .5 6 .3 8 .6-3 .6-7 1.400-8 3 1.500 2.500 5 5 9 7.500H28.900z" fill="#5a4424"/><path d="M28.900 47.500c4-.5 8 0 11 1.500 2.500 1.500 5 3.500 7 4.900H28.900z" fill="#c49a48"/><rect x="54" y="34.800" width="22.100" height="19.100" fill="#fff"/><rect x="55.500" y="36.600" width="8.500" height="1.300" fill="#7a7a7a"/><g fill="#d4d4d4"><rect x="55.500" y="39.500" width="19" height=".6"/><rect x="55.500" y="40.900" width="19" height=".6"/><rect x="55.500" y="42.300" width="19" height=".6"/><rect x="55.500" y="43.700" width="19" height=".6"/><rect x="55.500" y="45.100" width="19" height=".6"/><rect x="55.500" y="46.500" width="19" height=".6"/><rect x="55.500" y="47.900" width="12" height=".6"/></g><rect x="55" y="50.700" width="3" height="1.200" fill="#c8c8c8"/><rect x="69.700" y="50" width="5.800" height="2.900" fill="#e03a28"/></svg></td><td>章鱼图标<span class="l">PSD</span>源文件下载<p>发布时间：<span class="l">2013-10-12 09:25:18</span></p></td><td>界面设计<p><span class="l">ID: 82122</span></p></td><td>开放浏览</td><td><span class="l">admin</span></td><td>已审核</td><td>45</td></tr>
</tbody>
</table>
<div class="pagin">共<i class="l">1256</i>条记录，当前显示第&nbsp;<i>2&nbsp;</i>页</div>
<ul class="plist"><li><svg width="9" height="12" viewBox="0 0 9 12"><path d="M7 .8L1.800 5l5.200 4.200" fill="none" stroke="#c8c8c8" stroke-width="1.200"/></svg></li><li>1</li><li class="cur">2</li><li>3</li><li>4</li><li>5</li><li class="more">...</li><li>10</li><li><svg width="9" height="12" viewBox="0 0 9 12"><path d="M2.300 1l4.500 4.200-4.500 4.200" fill="none" stroke="#3399d5" stroke-width="1.700"/></svg></li></ul>
</div>
</body>
</html>
